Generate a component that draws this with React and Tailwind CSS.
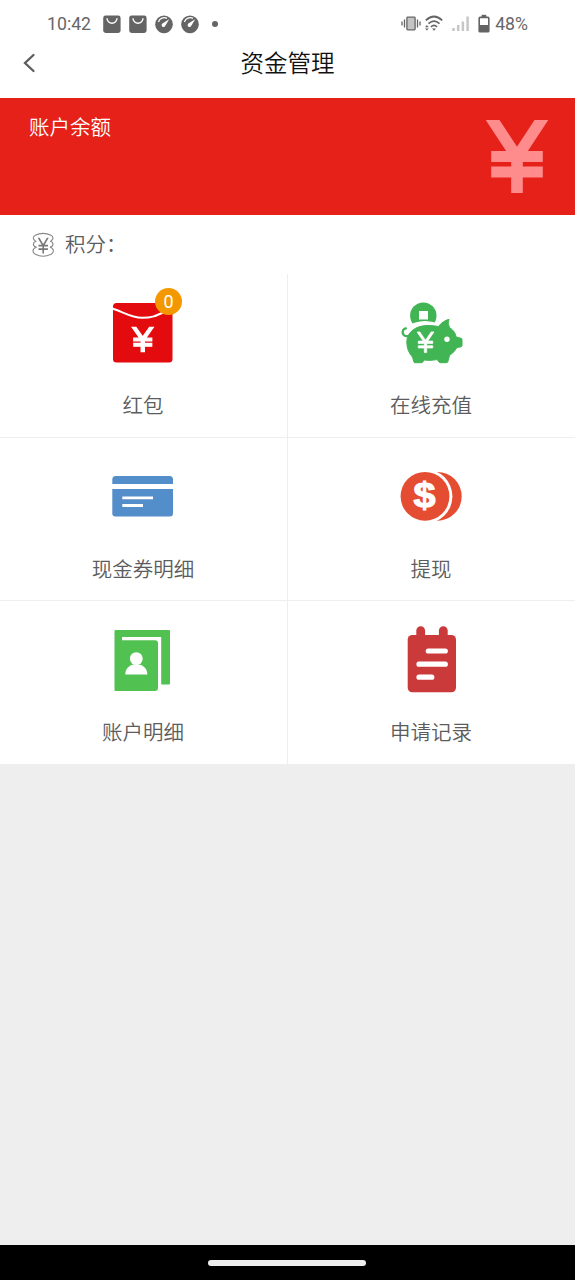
import React from 'react';
import { MdCurrencyYen } from 'react-icons/md';

const BagIcon = () => (
    <svg className="h-[19px] w-[18px] shrink-0" viewBox="0 0 18 19">
        <rect x="0.2" y="0.5" width="17.4" height="17.5" rx="2.4" fill="#646464" />
        <path d="M4 3.2a5 5 0 0 0 10 0" fill="none" stroke="#fff" strokeWidth="1.4" />
    </svg>
);

const GaugeIcon = () => (
    <svg className="h-[19px] w-[18px] shrink-0" viewBox="0 0 18 19">
        <path d="M9 .5a8.8 8.8 0 0 1 8.8 8.8c0 3.6-2.2 6.2-4.6 7.9Q9 19.5 4.8 17.2C2.4 15.5.2 12.9.2 9.3A8.8 8.8 0 0 1 9 .5z" fill="#646464" />
        <path d="M3.4 7A6.2 6.2 0 0 1 12 3.3" fill="none" stroke="#fff" strokeWidth="1.3" />
        <path d="M14.2 4.3 10.3 10.8a1.9 1.9 0 1 1-2.5-2.5z" fill="#fff" />
    </svg>
);

const StatusBar = () => (
    <div className="flex h-[47px] items-center pl-[47px] pr-[47px] pt-px font-['Roboto',sans-serif] text-[17.7px] font-normal text-[#666]">
        <span className="w-[55.5px] shrink-0">10:42</span>
        <div className="flex items-center gap-2">
            <BagIcon />
            <BagIcon />
            <GaugeIcon />
            <GaugeIcon />
        </div>
        <span className="ml-[13.5px] h-[6px] w-[6px] rounded-full bg-[#646464]"></span>

        <div className="ml-auto flex items-center">
            {/* Vibrate */}
            <svg className="h-5 w-5" viewBox="0 0 20 20">
                <rect x="5.9" y="3.2" width="8.2" height="12.6" rx="0.8" fill="#c4c4c4" stroke="#646464" strokeWidth="1.3" />
                <path d="M3.5 5.5v8M16.5 5.5v8M1 7.5v4M19 7.5v4" stroke="#646464" strokeWidth="1.3" />
            </svg>
            {/* Wifi */}
            <svg className="ml-[4px] h-5 w-[18px]" viewBox="0 0 18 20">
                <g fill="none" stroke="#646464" strokeWidth="1.7">
                    <path d="M.8 6.3Q9-1.3 17.2 6.3" />
                    <path d="M3.5 9.7Q9 4.7 14.5 9.7" />
                    <path d="M6 12.8Q9 10 12 12.8" />
                </g>
                <path d="M7 14.6h4l-2 2.2zM0 13.2l1.9-2.2 1.9 2.2zM0 14.4h3.8l-1.9 2.2z" fill="#646464" />
            </svg>
            {/* Signal */}
            <svg className="ml-[9px] h-5 w-[18px]" viewBox="0 0 18 20">
                <path d="M1.5 14v3M6.2 11v6M10.9 7.5v9.5M15.6 2.5v14.5" stroke="#c6c6c6" strokeWidth="2.5" />
            </svg>
            {/* Battery */}
            <svg className="ml-[8px] h-5 w-3" viewBox="0 0 12 20">
                <path d="M3.6 3V.8h4.6V3" fill="#646464" />
                <rect x="1.2" y="3.4" width="9.6" height="14.4" rx="0.8" fill="#fff" stroke="#646464" strokeWidth="1.6" />
                <path d="M1 11h10v7H1z" fill="#646464" />
            </svg>
            <span className="ml-[5px]">48%</span>
        </div>
    </div>
);

const RedPacketIcon = () => (
    <svg className="h-20 w-20" viewBox="0 0 80 80">
        <rect x="10" y="11" width="59.5" height="59.5" rx="3.5" fill="#e30b0d" />
        <path d="M9.5 16.5C20 20 29 25.8 39 25.8S53 24 62 19.5" fill="none" stroke="#fff" strokeWidth="2" />
        <MdCurrencyYen x="22" y="31.5" className="h-[32px] w-[35.5px] text-white [&>path:first-child]:hidden" preserveAspectRatio="none" strokeWidth="1" />
    </svg>
);

const PiggyIcon = () => (
    <svg className="h-20 w-20" viewBox="0 0 80 80">
        <circle cx="32.3" cy="23.7" r="13.2" fill="#41b454" />
        <rect x="28" y="19" width="9" height="8.5" fill="#fff" />
        <path d="M16 38.5C22 31.5 35 29.5 47 34" fill="none" stroke="#fff" strokeWidth="5" />
        <path d="M15.8 50C15.8 40 25 33.8 36 33.5Q43 33.5 47.5 34.5C50 31 54 28.3 58 27.3Q56.2 31.5 58.5 35.5Q64 39 65.2 45L70 46.3Q71 46.4 71 47.5V53.5Q71 54.7 70 54.8L66 55.5Q63.5 60 58.5 63.5L56.8 69.8Q56.5 70.7 55.5 70.7H49.3Q48.5 70.7 48 70L46.2 67.6Q39 69 33 68L31.8 70Q31.5 70.7 30.5 70.7H24Q23 70.7 22.8 69.7L21.5 65Q15.8 59 15.8 50z" fill="#41b454" stroke="#41b454" strokeWidth="1" strokeLinejoin="round" />
        <path d="M15 36.3C11.8 36.5 10.5 41 13 43.2Q14.5 44.6 17.5 44" fill="none" stroke="#41b454" strokeWidth="2.2" strokeLinecap="round" />
        <circle cx="56" cy="47.2" r="2.7" fill="#fff" />
        <MdCurrencyYen x="20" y="36.5" className="h-[27.5px] w-[29px] text-white [&>path:first-child]:hidden" preserveAspectRatio="none" strokeWidth="0.6" />
    </svg>
);

const CardIcon = () => (
    <svg className="h-20 w-20" viewBox="0 0 80 80">
        <path d="M9.3 28v-4.5a3.5 3.5 0 0 1 3.5-3.5h53.7a3.5 3.5 0 0 1 3.5 3.5V28zM9.3 33H70v24.2a3.3 3.3 0 0 1-3.5 3.3H12.8a3.3 3.3 0 0 1-3.5-3.3z" fill="#538dca" />
        <path d="M19.3 41.8H50M19.3 49.5H40" stroke="#fff" strokeWidth="2.8" />
    </svg>
);

const WithdrawIcon = () => (
    <svg className="h-20 w-20" viewBox="0 0 80 80">
        <circle cx="46.3" cy="40.3" r="24.4" fill="#e54d33" />
        <circle cx="34.2" cy="40.3" r="27.2" fill="#fff" />
        <circle cx="34" cy="40.3" r="24.4" fill="#e54d33" />
        <text x="33.5" y="51.3" textAnchor="middle" textLength="22" lengthAdjust="spacingAndGlyphs" fontSize="35" fontWeight="700" fill="#fff" stroke="#fff" strokeWidth="1.1" className="font-['Liberation_Sans',sans-serif]">$</text>
    </svg>
);

const AccountIcon = () => (
    <svg className="h-20 w-20" viewBox="0 -1 80 80">
        <path d="M12.5 10H66a1 1 0 0 1 1 1v52.5a1 1 0 0 1-1 1h-7.8V17H19v3.3h33a3 3 0 0 1 3 3V68a3 3 0 0 1-3 3H12.5a1 1 0 0 1-1-1V11a1 1 0 0 1 1-1z" fill="#51c252" />
        <circle cx="33.3" cy="38.6" r="6.4" fill="#fff" />
        <path d="M22.3 54.5c0-5.5 3.5-8.5 7-9.7h8c3.5 1.2 7 4.2 7 9.7z" fill="#fff" />
    </svg>
);

const RecordIcon = () => (
    <svg className="h-20 w-20" viewBox="0 -1 80 80">
        <rect x="16.7" y="15" width="48.3" height="57.3" rx="4.5" fill="#cb3a3b" />
        <path d="M29.7 18v-7.4M52.3 18v-7.4" stroke="#cb3a3b" strokeWidth="8.8" strokeLinecap="round" />
        <path d="M37.3 31h17M28 44.2h26.3M28 57.2h12.8" stroke="#fff" strokeWidth="5.2" strokeLinecap="round" />
    </svg>
);

const PointsIcon = () => (
    <svg className="h-[26px] w-[24px]" viewBox="0 0 24 26">
        <g fill="none" stroke="#888" strokeWidth="1.1">
            <path d="M4.5 9C1.4 7.5 1.7 4.5 4.3 3.2Q12-.4 20 3.2c2.6 1.3 2.9 4.3-.2 5.8" />
            <path d="M5.5 9.2C1.4 10 1.4 14.300 5.500 15.300M19 9.200C23 10 23 14.300 19 15.300" />
            <path d="M5.500 15.300C1 16.500 1 20.500 4.300 22.300Q12 26.300 20 22.300C23.300 20.500 23.300 16.500 19 15.300" />
        </g>
        <MdCurrencyYen x="2.7" y="3" className="h-[21px] w-[19px] text-[#777] [&>path:first-child]:hidden" preserveAspectRatio="none" strokeWidth="0" />
    </svg>
);

const menuItems = [
    { label: '红包', icon: RedPacketIcon, badge: 0 },
    { label: '在线充值', icon: PiggyIcon },
    { label: '现金券明细', icon: CardIcon },
    { label: '提现', icon: WithdrawIcon },
    { label: '账户明细', icon: AccountIcon },
    { label: '申请记录', icon: RecordIcon },
];

const App = () => {
    return (
        <div className="flex h-screen flex-col overflow-hidden bg-[#eee] font-['Noto_Sans_CJK_SC',sans-serif] text-[20.5px] font-[350] text-[#5c5c5c]">
            <header className="h-[98px] shrink-0 bg-white">
                <StatusBar />
                <div className="grid h-[32px] grid-cols-[60px_1fr_60px] items-center">
                    <button className="pl-[23px]" aria-label="back">
                        <svg className="h-5 w-[13px]" viewBox="0 0 13 20">
                            <path d="M10.5 2 2 10 10.5 18" fill="none" stroke="#5c5c5c" strokeWidth="2.3" strokeLinecap="round" />
                        </svg>
                    </button>
                    <h1 className="pb-[2px] text-center text-[23.5px] font-[350] leading-[30px] text-[#111]">资金管理</h1>
                </div>
            </header>

            {/* Balance */}
            <section className="flex h-[117px] shrink-0 justify-between bg-[#e62119] pl-[29px] pr-[10px] text-white">
                <span className="pt-[13px] leading-[30px]">账户余额</span>
                <MdCurrencyYen className="mt-[12px] h-[93px] w-[96px] text-[#ff8c8c] [&>path:first-child]:hidden" preserveAspectRatio="none" strokeWidth="0.9" />
            </section>

            {/* Points */}
            <div className="flex h-[59px] shrink-0 items-center bg-white pl-[31px]">
                <PointsIcon />
                <span className="ml-[10px] pb-[3px] leading-[30px]">积分：</span>
            </div>

            <main className="grid shrink-0 grid-cols-[288px_287px] bg-white">
                {menuItems.map(({ label, icon: Icon, badge }) => (
                    <div
                        key={label}
                        className="flex h-[163.5px] flex-col items-center border-b border-[#eee] pr-px pt-[18px] odd:border-r"
                    >
                        <div className="relative">
                            <Icon />
                            {badge !== undefined && (
                                <span className="absolute -top-[4px] left-[52px] flex h-[27px] w-[27px] items-center justify-center rounded-full bg-[#f39800] font-['Roboto',sans-serif] text-[18px] font-normal text-white">
                                    {badge}
                                </span>
                            )}
                        </div>
                        <span className="mt-[17px] leading-[30px]">{label}</span>
                    </div>
                ))}
            </main>

            {/* Gesture bar */}
            <footer className="mt-auto flex h-[35px] shrink-0 items-center justify-center bg-black pr-px">
                <span className="h-[6px] w-[158px] rounded-full bg-[#eee]"></span>
            </footer>
        </div>
    );
};

export default App;
